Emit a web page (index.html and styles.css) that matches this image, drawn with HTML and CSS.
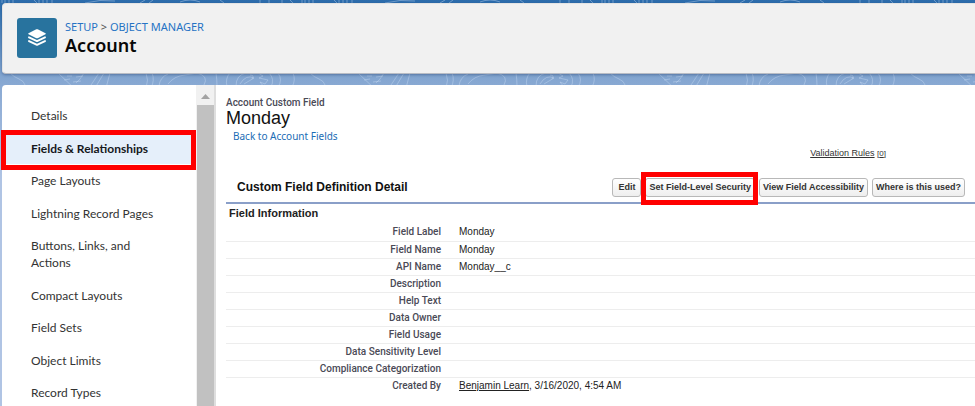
FILE: index.html
```html
<!DOCTYPE html>
<html lang="en">
<head>
<meta charset="utf-8">
<title>Account</title>
<meta name="viewport" content="width=device-width, initial-scale=1">
<link rel="stylesheet" href="styles.css">
</head>
<body>
<svg class="backdrop" width="100%" height="90" aria-hidden="true">
  <defs>
    <pattern id="contours" width="300" height="90" patternUnits="userSpaceOnUse">
      <g fill="none" stroke="#c8dcf2" stroke-opacity=".42">
        <path d="M10 73Q14 77 19 79T25 85M58 73L76 90M64 80l6-1M67 76h5M76 77l7-1M73 82l8-1M84 73Q80 80 76 83M99 73L89 88M104 73L95 88M110 73L106 88M146 73Q149 80 146 88M152 73Q155 80 151 88M159 86Q160 77 168 74M168 84Q174 76 185 75L197 73Q209 76 204 85M216 73Q217 79 217 87M227 87Q225 78 230 73M236 86Q236 75 246 73M240 84Q246 74 254 78L249 81L244 84M250 75q5 0 2 4M258 73L263 76L259 78L268 80L265 84L260 82L264 87M269 73Q275 79 271 87M278 73Q283 80 278 87M293 73Q296 80 292 87M304 78l-2 5"/>
        <path d="M2 0v3M5 0v3M9 0v3M13 0v3M34 0l3 3M39 0v3M43 0v3M47 0v3M52 0v3M85 3Q100 -1 115 1M145 0l-5 3M153 0l-4 3M180 2Q190 -2 200 2M220 0l4 3M260 0v3M269 0v3M282 0v3M290 0l3 3"/>
      </g>
    </pattern>
  </defs>
  <rect width="100%" height="90" fill="url(#contours)"/>
</svg>
<div class="page">
  <header class="header">
    <svg class="logo" viewBox="0 0 40 40" aria-hidden="true">
      <rect width="40" height="40" rx="3" fill="#28739e"/>
      <path fill="#fff" d="M19.300 11.300Q20 11 20.700 11.300L28.500 15.200Q29.200 15.700 28.500 16.200L20.700 20.200Q20 20.500 19.300 20.200L11.500 16.200Q10.800 15.700 11.500 15.200Z"/>
      <path fill="none" stroke="#fff" stroke-width="1.900" stroke-linecap="round" stroke-linejoin="round" d="M12 19.300L20 23.100L28 19.300M12 23.100L20 26.900L28 23.100"/>
    </svg>
    <div>
      <div class="crumbs"><a href="#">SETUP</a> &gt; <a href="#">OBJECT MANAGER</a></div>
      <h1 class="title">Account</h1>
    </div>
  </header>
  <div class="body">
    <nav class="nav">
      <ul class="nav-list">
        <li><a href="#">Details</a></li>
        <li class="current marked"><a href="#">Fields &amp; Relationships</a></li>
        <li><a href="#">Page Layouts</a></li>
        <li><a href="#">Lightning Record Pages</a></li>
        <li><a href="#">Buttons, Links, and Actions</a></li>
        <li><a href="#">Compact Layouts</a></li>
        <li><a href="#">Field Sets</a></li>
        <li><a href="#">Object Limits</a></li>
        <li><a href="#">Record Types</a></li>
      </ul>
    </nav>
    <div class="scrollbar" aria-hidden="true">
      <svg class="arrow" viewBox="0 0 9 5"><path fill="#a3a3a3" d="M0 5L4.500 0L9 5Z"/></svg>
      <div class="thumb"></div>
    </div>
    <main class="main">
      <div class="kind">Account Custom Field</div>
      <h2 class="name">Monday</h2>
      <a class="back" href="#">Back to Account Fields</a>
      <div class="rules"><a href="#">Validation Rules</a> <small>[<u>0</u>]</small></div>
      <div class="bar">
        <h3 class="bar-title">Custom Field Definition Detail</h3>
        <div class="actions">
          <button type="button">Edit</button>
          <span class="marked"><button type="button">Set Field-Level Security</button></span>
          <button type="button">View Field Accessibility</button>
          <button type="button">Where is this used?</button>
        </div>
      </div>
      <h4 class="section">Field Information</h4>
      <table class="fields">
        <tr><th scope="row">Field Label</th><td>Monday</td></tr>
        <tr><th scope="row">Field Name</th><td>Monday</td></tr>
        <tr><th scope="row">API Name</th><td>Monday__c</td></tr>
        <tr><th scope="row">Description</th><td></td></tr>
        <tr><th scope="row">Help Text</th><td></td></tr>
        <tr><th scope="row">Data Owner</th><td></td></tr>
        <tr><th scope="row">Field Usage</th><td></td></tr>
        <tr><th scope="row">Data Sensitivity Level</th><td></td></tr>
        <tr><th scope="row">Compliance Categorization</th><td></td></tr>
        <tr><th scope="row">Created By</th><td><a href="#">Benjamin Learn</a>, 3/16/2020, 4:54 AM</td></tr>
      </table>
    </main>
  </div>
</div>
</body>
</html>
```
FILE: styles.css
```css
* { box-sizing: border-box; }
body {
  margin: 0;
  min-height: 100vh;
  background: linear-gradient(#2c6cac 0, #3474b2 8px, #82a5d0 76px, #8cabd4 90px, #b0c4e4 180px);
  font: 10px/16px "Liberation Sans", Arial, sans-serif;
  color: #222;
}
ul, h1, h2, h3, h4 { margin: 0; padding: 0; }
.backdrop { position: absolute; top: 0; left: 0; }
.page {
  position: relative;
  display: flex;
  flex-direction: column;
  gap: 11px;
  min-height: 100vh;
  padding: 3px 0 0 2px;
}
.header {
  display: flex;
  gap: 8px;
  height: 71px;
  padding: 14px;
  background: #f1f1f1;
  border: 1px solid #e4e4e4;
  border-width: 1px 0 1px 1px;
  border-radius: 4px 0 0 4px;
  border-bottom-color: #b8bcc4;
  box-shadow: 0 1px 3px rgba(0, 30, 80, .35);
}
.logo { width: 40px; height: 40px; }
.crumbs { font: 11px/18px "Noto Sans", sans-serif; color: #555; }
.crumbs a { color: #2673c4; text-decoration: none; }
.title { font: 600 18px/18px "Noto Sans", sans-serif; color: #080707; }
.body {
  flex: 1;
  display: flex;
  background: #fff;
  border-radius: 4px 0 0 0;
}
.nav { width: 194px; padding: 14px 0 0; }
.nav-list { list-style: none; font: 12px/17px Lato, sans-serif; }
.nav-list li { position: relative; padding: 8px 28px 7px 29px; }
.nav-list li:nth-child(odd) { padding-bottom: 8px; }
.nav-list a { color: #333; text-decoration: none; }
.nav-list .current { background: #e5effa; }
.nav-list .current a { color: #16181c; font-weight: 700; }
.marked { position: relative; }
.marked::after {
  content: "";
  position: absolute;
  inset: -2px 0 -6px -1px;
  border: 5px solid #f00;
  pointer-events: none;
}
.scrollbar {
  display: flex;
  flex-direction: column;
  align-items: center;
  width: 18px;
  padding-top: 9px;
  background: #f1f1f1;
}
.arrow { width: 9px; height: 5px; }
.thumb { flex: 1; width: 17px; margin-top: 6px; background: #c1c1c1; }
.main {
  flex: 1;
  padding: 10px 0 0 10px;
  border-left: 2px solid #dedede;
}
.kind { font-family: Roboto, sans-serif; font-weight: 500; color: #4a4a56; }
.name { font-size: 18px; font-weight: 400; line-height: 14px; color: #111; }
.back {
  display: block;
  width: max-content;
  margin-left: 7px;
  font: 10px/22px "Noto Sans", sans-serif;
  color: #1a6cb5;
  text-decoration: none;
}
.rules { margin-right: 89px; font: 9px/12px "Liberation Sans", Arial, sans-serif; text-align: right; }
.rules, .rules a { color: #333; }
.rules a { text-decoration: underline; }
.rules small { font-size: 8px; }
.bar {
  display: flex;
  justify-content: space-between;
  align-items: center;
  height: 44px;
  padding: 14px 10px 2px 11px;
  border-bottom: 2px solid #8a9fc8;
}
.bar-title { font-size: 12px; color: #111; }
.actions { display: flex; gap: 4px; }
.actions button {
  display: block;
  height: 19px;
  min-width: 29px;
  padding: 0 3px;
  font: 700 9px/17px "Liberation Sans", Arial, sans-serif;
  color: #333;
  background: linear-gradient(#fff, #eee);
  border: 1px solid #b8b8b8;
  border-radius: 3px;
}
.actions .marked::after { inset: -6px -3px -8px -4px; }
.section { padding: 0 3px 2px; font-size: 11px; line-height: 18px; }
.fields { width: 100%; border-collapse: collapse; }
.fields th, .fields td { height: 17px; padding: 0; line-height: 16px; border-bottom: 1px solid #ededed; }
.fields th { width: 215px; font-family: Roboto, sans-serif; font-weight: 500; text-align: right; color: #4a4a56; }
.fields td { padding-left: 18px; }
.fields a { color: #222; }
.fields tr:last-child > * { border: 0; }
```
